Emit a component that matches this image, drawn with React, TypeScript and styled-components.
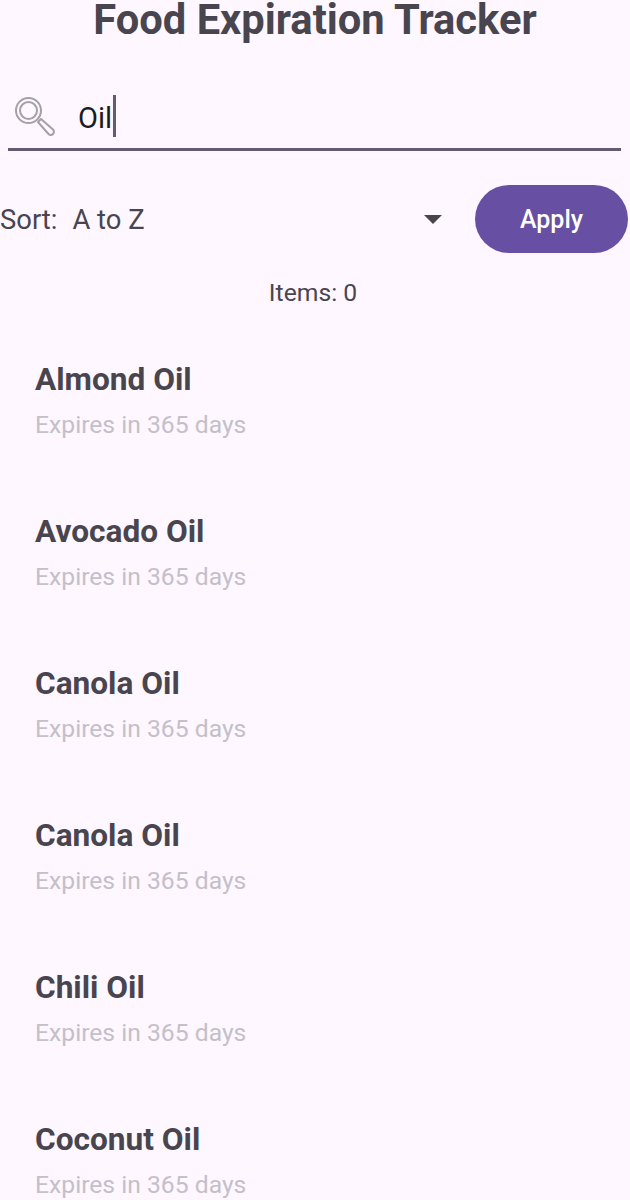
import React from 'react';
import styled, {createGlobalStyle} from 'styled-components';

const GlobalStyle = createGlobalStyle`
  html, body {
    margin: 0;
    padding: 0;
    height: 1200px;
    overflow: hidden;
    background: #fef7ff;
    font-family: Roboto, "Liberation Sans", sans-serif;
  }
`;

const Screen = styled.div`
  width: 630px;
  height: 1200px;
  overflow: hidden;
  background: #fef7ff;
  color: #49454f;
`;

const Title = styled.h1`
  margin: 0;
  height: 40px;
  line-height: 40px;
  font-size: 41.7px;
  font-weight: 700;
  text-align: center;
  color: #49454f;
`;

const SearchBar = styled.div`
  display: flex;
  align-items: center;
  height: 72px;
  margin: 39px 9px 0 8px;
  box-sizing: border-box;
  border-bottom: 3px solid #625b71;
`;

const SearchIcon = styled.svg`
  width: 40px;
  height: 40px;
  margin-left: 7px;
  margin-top: 7px;
  flex: none;
`;

const SearchText = styled.span`
  margin-left: 23px;
  margin-top: 8px;
  font-size: 29px;
  color: #1d1b20;
`;

const Caret = styled.span`
  width: 3px;
  height: 42px;
  margin-left: 1px;
  margin-top: 5px;
  background: #625b71;
`;

const SortRow = styled.div`
  display: flex;
  align-items: center;
  height: 68px;
  margin-top: 34px;
  padding-right: 2px;
`;

const SortLabel = styled.span`
  margin-top: 2px;
  font-size: 27.4px;
  color: #49454f;
`;

const SortValue = styled.span`
  margin-left: 15px;
  margin-top: 2px;
  flex: 1;
  font-size: 27.4px;
  color: #49454f;
`;

const Arrow = styled.span`
  width: 0;
  height: 0;
  margin-right: 33px;
  border-left: 9px solid transparent;
  border-right: 9px solid transparent;
  border-top: 9px solid #49454f;
`;

const ApplyButton = styled.button`
  width: 153px;
  height: 68px;
  padding: 1px 0 0;
  border: 0;
  border-radius: 34px;
  background: #6750a4;
  color: #ffffff;
  font-family: inherit;
  font-size: 25px;
  font-weight: 500;
`;

const Count = styled.div`
  margin-top: 22px;
  height: 36px;
  line-height: 36px;
  font-size: 24.7px;
  text-align: center;
  color: #49454f;
  padding-right: 4px;
`;

const List = styled.div`
  display: flex;
  flex-direction: column;
  margin-top: 33px;
  padding-left: 35px;
`;

const Item = styled.div`
  display: flex;
  flex-direction: column;
  height: 152px;
  padding-top: 14px;
  box-sizing: border-box;
`;

const ItemName = styled.div`
  height: 44px;
  line-height: 44px;
  font-size: 31.6px;
  font-weight: 700;
  color: #49454f;
`;

const ItemExpiry = styled.div`
  height: 45px;
  line-height: 45px;
  font-size: 24.7px;
  color: #c4c0c9;
`;

const items = ['Almond Oil', 'Avocado Oil', 'Canola Oil', 'Canola Oil', 'Chili Oil', 'Coconut Oil'];

function App() {
  return (
    <Screen>
      <GlobalStyle />
      <Title>Food Expiration Tracker</Title>
      <SearchBar>
        <SearchIcon viewBox="0 0 40 40" fill="none">
          <circle cx="13.5" cy="13.5" r="12.5" stroke="#a3a0a6" strokeWidth="2" />
          <circle cx="13.5" cy="13.5" r="8.5" stroke="#a3a0a6" strokeWidth="2" />
          <path d="M23 25l3-3 12 10.5a3 3 0 0 1-4.5 4.5z" stroke="#a3a0a6" strokeWidth="2" strokeLinejoin="round" />
        </SearchIcon>
        <SearchText>Oil</SearchText>
        <Caret />
      </SearchBar>
      <SortRow>
        <SortLabel>Sort:</SortLabel>
        <SortValue>A to Z</SortValue>
        <Arrow />
        <ApplyButton>Apply</ApplyButton>
      </SortRow>
      <Count>Items: 0</Count>
      <List>
        {items.map((name, i) => (
          <Item key={i}>
            <ItemName>{name}</ItemName>
            <ItemExpiry>Expires in 365 days</ItemExpiry>
          </Item>
        ))}
      </List>
    </Screen>
  );
}

export default App;
